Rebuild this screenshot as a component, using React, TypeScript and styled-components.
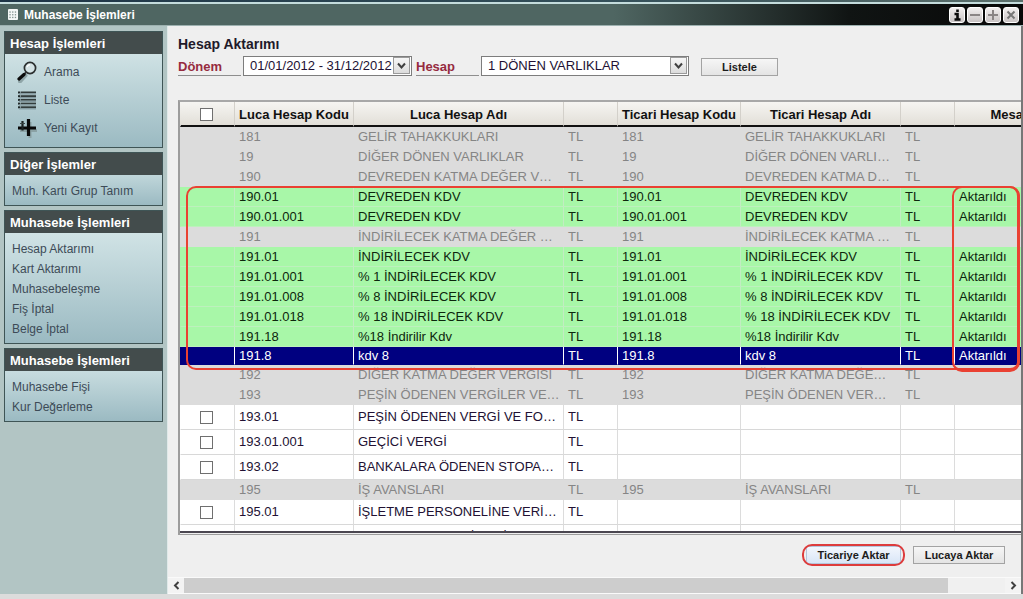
import React from "react";
import styled, { createGlobalStyle, css } from "styled-components";

const GlobalStyle = createGlobalStyle`
  * { box-sizing: border-box; }
  body {
    margin: 0;
    background: #dcdcdc;
    font-family: "Liberation Sans", Arial, sans-serif;
    font-size: 13px;
    color: #111;
  }
  button, select, input { font-family: inherit; margin: 0; }
`;

const Page = styled.div`
  display: flex;
  flex-direction: column;
  height: 100vh;
  min-height: 480px;
  padding-bottom: 5px;
  overflow: hidden;
`;

const DesktopEdge = styled.div`
  flex: none;
  height: 4px;
  background: linear-gradient(to right, #1d3446, #34505a 60%, #5b6f6b);
  border-bottom: 2px solid #c4dcdc;
`;

const TitleBar = styled.header`
  flex: none;
  display: flex;
  align-items: center;
  height: 22px;
  padding: 0 4px 0 8px;
  background: linear-gradient(to right, #4f6662 0%, #4f6662 60%, #101413 83%, #080808 100%);
  border-bottom: 1px solid #9db1b0;
`;

const WindowTitle = styled.h1`
  flex: 1;
  margin: 0 0 0 6px;
  font-size: 12px;
  line-height: 16px;
  font-weight: bold;
  color: #fff;
`;

const Controls = styled.div`
  display: flex;
  gap: 2px;
`;

const ControlButton = styled.button`
  width: 16px;
  height: 16px;
  padding: 0;
  border: 1px solid #fff;
  border-radius: 3px;
  background: linear-gradient(#f2efef, #c9c4c4);
  svg { display: block; }
`;

const Body = styled.div`
  flex: 1;
  min-height: 0;
  display: flex;
`;

const Sidebar = styled.nav`
  flex: none;
  width: 168px;
  padding: 5px 4px 0 4px;
  display: flex;
  flex-direction: column;
  gap: 4px;
  background: #b2c5c4;
  border-right: 1px solid #dfe9e9;
`;

const Panel = styled.section`
  border: 1px solid #3f5556;
  background: linear-gradient(#dbebec, #9bbac2);
`;

const PanelTitle = styled.h2`
  margin: 0;
  padding: 1px 5px 0;
  height: 22px;
  font-size: 13px;
  line-height: 22px;
  font-weight: bold;
  color: #fff;
  background: #434c4c;
`;

const PanelList = styled.ul<{ $icons?: boolean }>`
  list-style: none;
  margin: 0;
  padding: ${(p) => (p.$icons ? "4px 12px 5px" : "6px 7px 4px")};
`;

const PanelLink = styled.a<{ $icons?: boolean }>`
  display: flex;
  align-items: center;
  gap: 7px;
  height: ${(p) => (p.$icons ? "28px" : "20px")};
  font-size: 12px;
  line-height: 16px;
  white-space: nowrap;
  color: #3d4b57;
  text-decoration: none;
`;

const Main = styled.main`
  flex: 1;
  min-width: 0;
  display: flex;
  flex-direction: column;
  background: #efefef;
  border-right: 2px solid #777;
`;

const Content = styled.div`
  flex: 1;
  min-height: 0;
  display: flex;
  flex-direction: column;
  padding: 10px 0 13px 10px;
`;

const Heading = styled.h2`
  flex: none;
  margin: 0 0 4px;
  font-size: 14px;
  line-height: 16px;
  font-weight: bold;
  color: #1f1a2a;
`;

const Filters = styled.form`
  flex: none;
  display: flex;
  align-items: flex-end;
  height: 20px;
  margin-bottom: 24px;
`;

const FieldLabel = styled.label`
  width: 63px;
  margin-right: 2px;
  font-size: 13px;
  line-height: 16px;
  font-weight: bold;
  color: #962b3f;
  border-bottom: 1px solid #8e8e8e;
`;

const SelectBox = styled.span<{ $w: number }>`
  position: relative;
  width: ${(p) => p.$w}px;
  height: 20px;
  margin-right: 4px;
`;

const Select = styled.select`
  appearance: none;
  display: block;
  width: 100%;
  height: 20px;
  padding: 0 18px 0 6px;
  border: 1px solid #7d7d7d;
  border-radius: 0;
  background: #fff;
  font-size: 13px;
  line-height: 16px;
  color: #221133;
`;

const SelectArrow = styled.span`
  position: absolute;
  top: 1px;
  right: 2px;
  width: 17px;
  height: 17px;
  border: 1px solid #9a9a9a;
  background: linear-gradient(#f6f6f6, #dcdcdc);
  pointer-events: none;
  svg { display: block; }
`;

const Button = styled.button<{ $w: number; $active?: boolean }>`
  width: ${(p) => p.$w}px;
  height: 18px;
  padding: 0;
  border: 1px solid ${(p) => (p.$active ? "#b5c6dc" : "#a3a3a3")};
  background: ${(p) =>
    p.$active ? "linear-gradient(#f2f6fd, #d9e6f7)" : "linear-gradient(#f6f6f6, #e4e4e4)"};
  font-size: 11px;
  line-height: 14px;
  font-weight: bold;
  color: #1c1c1c;
`;

const ListButton = styled(Button)`
  margin-left: 8px;
`;

const GridFrame = styled.div`
  position: relative;
  flex: 1;
  min-height: 0;
  overflow: hidden;
  padding-bottom: 1px;
  border: solid #9c9c9c;
  border-width: 2px 0 1px 2px;
  border-top-color: #a8a8a8;
`;

const GridViewport = styled.div`
  height: 100%;
  overflow: hidden;
  background: #fff;
  border-bottom: 2px solid #4a4650;
`;

const Grid = styled.table`
  width: 100%;
  min-width: 882px;
  table-layout: fixed;
  border-collapse: separate;
  border-spacing: 0;
`;

const HeadCell = styled.th`
  height: 25px;
  padding: 2px 0 0;
  font-size: 13px;
  line-height: 16px;
  font-weight: bold;
  text-align: center;
  white-space: nowrap;
  overflow: hidden;
  color: #111;
  background: linear-gradient(#f6f5f2, #e2dfd8);
  border-left: 1px solid #d3d0ca;
  border-bottom: 2px solid #111;
  &:first-child {
    padding-right: 2px;
    border-left-color: transparent;
  }
`;

type Kind = "parent" | "done" | "selected" | "open";

const kinds = {
  parent: css`--bg: #dcdcdc; --fg: #858585; --v: #dcdcdc; --h: #dcdcdc; --row: 20px;`,
  done: css`--bg: #a8f7a8; --fg: #0d260d; --v: #c2ecc2; --h: #bdf0bd; --row: 20px;`,
  selected: css`--bg: #000080; --fg: #fff; --v: #fff; --h: #000080; --row: 18px;`,
  open: css`--bg: #fff; --fg: #221133; --v: #dcdcdc; --h: #d8d8d8; --row: 25px;`,
};

const Row = styled.tr<{ $kind: Kind }>`
  ${(p) => kinds[p.$kind]}
`;

const Cell = styled.td<{ $inset?: boolean }>`
  height: var(--row);
  padding: 0 ${(p) => (p.$inset ? 8 : 3)}px 0 4px;
  font-size: 13px;
  line-height: 16px;
  white-space: nowrap;
  overflow: hidden;
  text-overflow: ellipsis;
  color: var(--fg);
  background: var(--bg);
  border-left: 1px solid var(--v);
  border-bottom: 1px solid var(--h);
  &:first-child {
    padding: 0 2px 0 0;
    border-left-color: var(--bg);
  }
`;

const Check = styled.input`
  appearance: none;
  display: block;
  width: 13px;
  height: 13px;
  margin: 0 auto;
  border: 1px solid #6f6f6f;
  background: #fff;
`;

const RowsMark = styled.div`
  position: absolute;
  top: 84px;
  left: 6px;
  right: 1px;
  height: 184px;
  border: 2px solid #ea4132;
  border-radius: 10px;
  pointer-events: none;
`;

const MessagesMark = styled(RowsMark)`
  left: 772px;
  height: 186px;
  border-width: 2px 3px 3px 2px;
`;

const Actions = styled.div`
  flex: none;
  display: flex;
  justify-content: flex-end;
  gap: 12px;
  padding: 11px 16px 0 0;
`;

const ActionMark = styled.span`
  position: relative;
  display: flex;
  &::after {
    content: "";
    position: absolute;
    inset: -2px -4px;
    border: 2px solid #dd3c3c;
    border-radius: 10px;
    pointer-events: none;
  }
`;

const ScrollRow = styled.div`
  flex: none;
  display: flex;
  height: 17px;
  background: #f0f0f0;
  border-top: 1px solid #fafafa;
  border-bottom: 1px solid #fafafa;
`;

const ScrollButton = styled.button`
  flex: none;
  width: 16px;
  padding: 0;
  border: 0;
  background: #f3f3f3;
  svg { display: block; margin: auto; }
`;

const Track = styled.div`
  flex: 1;
  display: flex;
`;

const Thumb = styled.div`
  width: 93%;
  background: #cdcdcd;
`;

const SearchIcon = () => (
  <svg width="20" height="22" viewBox="0 0 20 22" fill="none">
    <path d="M3 20.5 8.5 14.5" stroke="#8fa5a8" strokeWidth="4" strokeLinecap="round" />
    <circle cx="13" cy="7" r="5.6" fill="#d4e3e5" stroke="#2b2f2f" strokeWidth="1.7" />
    <path d="M10 6.2A3.4 3.4 0 0 1 13 3.6" stroke="#fff" strokeWidth="1.1" />
    <path d="M9.2 11.2 7 13.3" stroke="#333" strokeWidth="1.8" />
    <path d="M7 13.5 2 18" stroke="#0c0c0c" strokeWidth="3.2" strokeLinecap="round" />
  </svg>
);

const ListIcon = () => (
  <svg width="20" height="20" viewBox="0 0 20 20">
    {[1.5, 5.2, 8.9, 12.6, 16.3].map((y) => (
      <g key={y}>
        <rect x="1" y={y} width="2.4" height="2" fill="#222b2b" />
        <rect x="4" y={y} width="15" height="1.8" fill="#333d3d" />
        <rect x="2" y={y + 1.8} width="17" height="1.3" fill="#8399a0" />
      </g>
    ))}
  </svg>
);

const PlusIcon = () => (
  <svg width="20" height="20" viewBox="0 0 20 20">
    <path d="M13 4v16M3 12.5h17" stroke="#8ba2a5" strokeWidth="3" />
    <path d="M11.5 1v17M1 10h18" stroke="#080808" strokeWidth="3.2" />
    <path d="M5.5 3v9.5" stroke="#1c2222" strokeWidth="2.2" />
    <path d="M3 5.5h5" stroke="#3a4646" strokeWidth="1" />
  </svg>
);

const GridIcon = () => (
  <svg width="10" height="11" viewBox="0 0 10 11">
    <rect width="10" height="11" rx="1" fill="#f4f7f6" />
    <g fill="#7d8e8b">
      {[2, 4.7, 7.4].map((y) => [1.4, 4.1, 6.8].map((x) => <rect key={`${x}-${y}`} x={x} y={y + 0.4} width="1.3" height="1.3" />))}
    </g>
  </svg>
);

const Chevron = ({ d }: { d: string }) => (
  <svg width="15" height="15" viewBox="0 0 15 15" fill="none" stroke="#404040" strokeWidth="2">
    <path d={d} />
  </svg>
);

const controls = [
  { label: "Bilgi", color: "#0a0a0a", width: 2.6, d: "M7.5 1.5v2.4M4.5 6h3v6.5M4.5 11.5h6" },
  { label: "Küçült", color: "#8a8585", width: 2, d: "M2 7h10" },
  { label: "Büyüt", color: "#8a8585", width: 2, d: "M2 7h10M7 2v10" },
  { label: "Kapat", color: "#777", width: 2, d: "M3.5 3.5l7 7M10.5 3.5l-7 7" },
];

const panels = [
  {
    title: "Hesap İşlemleri",
    items: [
      { text: "Arama", icon: <SearchIcon /> },
      { text: "Liste", icon: <ListIcon /> },
      { text: "Yeni Kayıt", icon: <PlusIcon /> },
    ],
    icons: true,
  },
  { title: "Diğer İşlemler", items: [{ text: "Muh. Kartı Grup Tanım" }] },
  {
    title: "Muhasebe İşlemleri",
    items: [
      { text: "Hesap Aktarımı" },
      { text: "Kart Aktarımı" },
      { text: "Muhasebeleşme" },
      { text: "Fiş İptal" },
      { text: "Belge İptal" },
    ],
  },
  { title: "Muhasebe İşlemleri", items: [{ text: "Muhasebe Fişi" }, { text: "Kur Değerleme" }] },
] as { title: string; icons?: boolean; items: { text: string; icon?: React.ReactNode }[] }[];

const columns = [54, 119, 210, 54, 123, 160, 54];
const headers = ["Luca Hesap Kodu", "Luca Hesap Adı", "", "Ticari Hesap Kodu", "Ticari Hesap Adı", "", "Mesaj"];

const rows: [Kind, string, string][] = [
  ["parent", "181", "GELİR TAHAKKUKLARI"],
  ["parent", "19", "DİĞER DÖNEN VARLIKLAR"],
  ["parent", "190", "DEVREDEN KATMA DEĞER VERGİSİ"],
  ["done", "190.01", "DEVREDEN KDV"],
  ["done", "190.01.001", "DEVREDEN KDV"],
  ["parent", "191", "İNDİRİLECEK KATMA DEĞER VERGİSİ"],
  ["done", "191.01", "İNDİRİLECEK KDV"],
  ["done", "191.01.001", "% 1 İNDİRİLECEK KDV"],
  ["done", "191.01.008", "% 8 İNDİRİLECEK KDV"],
  ["done", "191.01.018", "% 18 İNDİRİLECEK KDV"],
  ["done", "191.18", "%18 İndirilir Kdv"],
  ["selected", "191.8", "kdv 8"],
  ["parent", "192", "DİĞER KATMA DEĞER VERGİSİ"],
  ["parent", "193", "PEŞİN ÖDENEN VERGİLER VE FONLAR"],
  ["open", "193.01", "PEŞİN ÖDENEN VERGİ VE FONLAR"],
  ["open", "193.01.001", "GEÇİCİ VERGİ"],
  ["open", "193.02", "BANKALARA ÖDENEN STOPAJLAR"],
  ["parent", "195", "İŞ AVANSLARI"],
  ["open", "195.01", "İŞLETME PERSONELİNE VERİLEN"],
];

export default function App() {
  return (
    <Page>
      <GlobalStyle />
      <DesktopEdge />
      <TitleBar>
        <GridIcon />
        <WindowTitle>Muhasebe İşlemleri</WindowTitle>
        <Controls>
          {controls.map((c) => (
            <ControlButton key={c.label} type="button" aria-label={c.label}>
              <svg width="14" height="14" viewBox="0 0 14 14" fill="none" stroke={c.color} strokeWidth={c.width}>
                <path d={c.d} />
              </svg>
            </ControlButton>
          ))}
        </Controls>
      </TitleBar>
      <Body>
        <Sidebar>
          {panels.map((panel, i) => (
            <Panel key={i}>
              <PanelTitle>{panel.title}</PanelTitle>
              <PanelList $icons={panel.icons}>
                {panel.items.map((item) => (
                  <li key={item.text}>
                    <PanelLink href="#" $icons={panel.icons}>
                      {item.icon}
                      {item.text}
                    </PanelLink>
                  </li>
                ))}
              </PanelList>
            </Panel>
          ))}
        </Sidebar>
        <Main>
          <Content>
            <Heading>Hesap Aktarımı</Heading>
            <Filters onSubmit={(e) => e.preventDefault()}>
              <FieldLabel htmlFor="donem">Dönem</FieldLabel>
              <SelectBox $w={169}>
                <Select id="donem">
                  <option>01/01/2012 - 31/12/2012</option>
                </Select>
                <SelectArrow><Chevron d="M4 5.5 7.5 9.5 11 5.5" /></SelectArrow>
              </SelectBox>
              <FieldLabel htmlFor="hesap">Hesap</FieldLabel>
              <SelectBox $w={208}>
                <Select id="hesap">
                  <option>1 DÖNEN VARLIKLAR</option>
                </Select>
                <SelectArrow><Chevron d="M4 5.5 7.5 9.5 11 5.5" /></SelectArrow>
              </SelectBox>
              <ListButton type="submit" $w={77}>Listele</ListButton>
            </Filters>
            <GridFrame>
              <GridViewport>
                <Grid>
                  <colgroup>
                    {columns.map((w, i) => <col key={i} width={w} />)}
                    <col />
                  </colgroup>
                  <thead>
                    <tr>
                      <HeadCell><Check type="checkbox" aria-label="Tümünü seç" /></HeadCell>
                      {headers.map((h, i) => <HeadCell key={i}>{h}</HeadCell>)}
                    </tr>
                  </thead>
                  <tbody>
                    {rows.map(([kind, code, name]) => {
                      const open = kind === "open";
                      const sent = kind === "done" || kind === "selected";
                      return (
                        <Row key={code} $kind={kind}>
                          <Cell>{open && <Check type="checkbox" aria-label={code} />}</Cell>
                          <Cell>{code}</Cell>
                          <Cell>{name}</Cell>
                          <Cell>TL</Cell>
                          <Cell>{open ? "" : code}</Cell>
                          <Cell $inset>{open ? "" : name}</Cell>
                          <Cell>{open ? "" : "TL"}</Cell>
                          <Cell>{sent ? "Aktarıldı" : ""}</Cell>
                        </Row>
                      );
                    })}
                    <Row $kind="open">
                      <Cell /><Cell /><Cell>MEMURLARA VERİLEN İŞ AVANSI</Cell><Cell /><Cell /><Cell /><Cell /><Cell />
                    </Row>
                  </tbody>
                </Grid>
              </GridViewport>
              <RowsMark />
              <MessagesMark />
            </GridFrame>
            <Actions>
              <ActionMark>
                <Button type="button" $w={95} $active>Ticariye Aktar</Button>
              </ActionMark>
              <Button type="button" $w={92}>Lucaya Aktar</Button>
            </Actions>
          </Content>
          <ScrollRow>
            <ScrollButton type="button" aria-label="Sola kaydır"><Chevron d="M9.5 4 6 7.5 9.5 11" /></ScrollButton>
            <Track><Thumb /></Track>
            <ScrollButton type="button" aria-label="Sağa kaydır"><Chevron d="M5.5 4 9 7.5 5.5 11" /></ScrollButton>
          </ScrollRow>
        </Main>
      </Body>
    </Page>
  );
}
